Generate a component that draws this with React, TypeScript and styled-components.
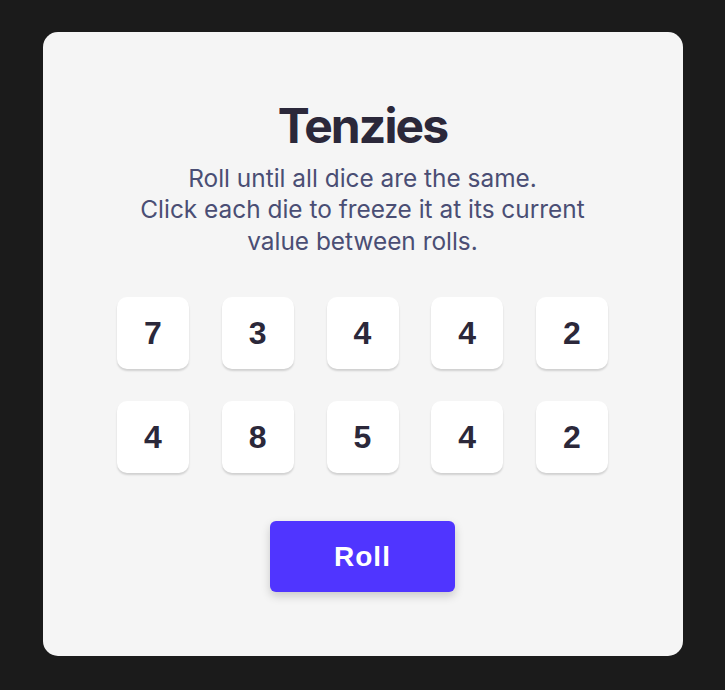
import React from "react";
import styled, { createGlobalStyle } from "styled-components";

const GlobalStyle = createGlobalStyle`
  html, body {
    margin: 0;
    padding: 0;
    background: #1b1b1b;
  }
  body {
    font-family: Inter, "Noto Sans", sans-serif;
  }
`;

const Page = styled.div`
  display: flex;
  justify-content: center;
  padding: 32px 0;
`;

const Card = styled.main`
  width: 640px;
  box-sizing: border-box;
  background: #f5f5f5;
  border-radius: 15px;
  padding: 64px 0 64px;
  display: flex;
  flex-direction: column;
  align-items: center;
`;

const Title = styled.h1`
  margin: 0;
  font-family: Inter, sans-serif;
  font-size: 48px;
  font-weight: 700;
  letter-spacing: -1.9px;
  line-height: normal;
  color: #2b283a;
`;

const Instructions = styled.p`
  margin: 8px 0 0;
  width: 480px;
  font-family: Inter, sans-serif;
  font-size: 24.4px;
  line-height: 31.4px;
  font-weight: 400;
  color: #4a4e74;
  text-align: center;
`;

const DiceGrid = styled.div`
  margin-top: 40px;
  display: grid;
  grid-template-columns: repeat(5, 72px);
  column-gap: 32.75px;
  row-gap: 32px;
`;

const Die = styled.button<{ $held?: boolean }>`
  width: 72px;
  height: 72px;
  border: none;
  border-radius: 10px;
  background: ${(p) => (p.$held ? "#59e391" : "#ffffff")};
  box-shadow: 0 2px 2px rgba(0, 0, 0, 0.15);
  display: flex;
  align-items: center;
  justify-content: center;
  font-family: "Liberation Sans", Arial, sans-serif;
  font-size: 32px;
  font-weight: 700;
  color: #2b283a;
  padding: 0;
  cursor: pointer;
`;

const RollButton = styled.button`
  margin-top: 48px;
  width: 185px;
  height: 71px;
  border: none;
  border-radius: 6px;
  background: #5035ff;
  color: #ffffff;
  font-family: "Liberation Sans", Arial, sans-serif;
  font-size: 28px;
  font-weight: 700;
  letter-spacing: 1px;
  box-shadow: 0 4px 10px rgba(0, 0, 0, 0.18);
  cursor: pointer;
`;

const dice = [7, 3, 4, 4, 2, 4, 8, 5, 4, 2];

export default function App() {
  return (
    <>
      <GlobalStyle />
      <Page>
        <Card>
          <Title>Tenzies</Title>
          <Instructions>
            Roll until all dice are the same.
            <br />
            Click each die to freeze it at its current value between rolls.
          </Instructions>
          <DiceGrid>
            {dice.map((v, i) => (
              <Die key={i}>{v}</Die>
            ))}
          </DiceGrid>
          <RollButton>Roll</RollButton>
        </Card>
      </Page>
    </>
  );
}
